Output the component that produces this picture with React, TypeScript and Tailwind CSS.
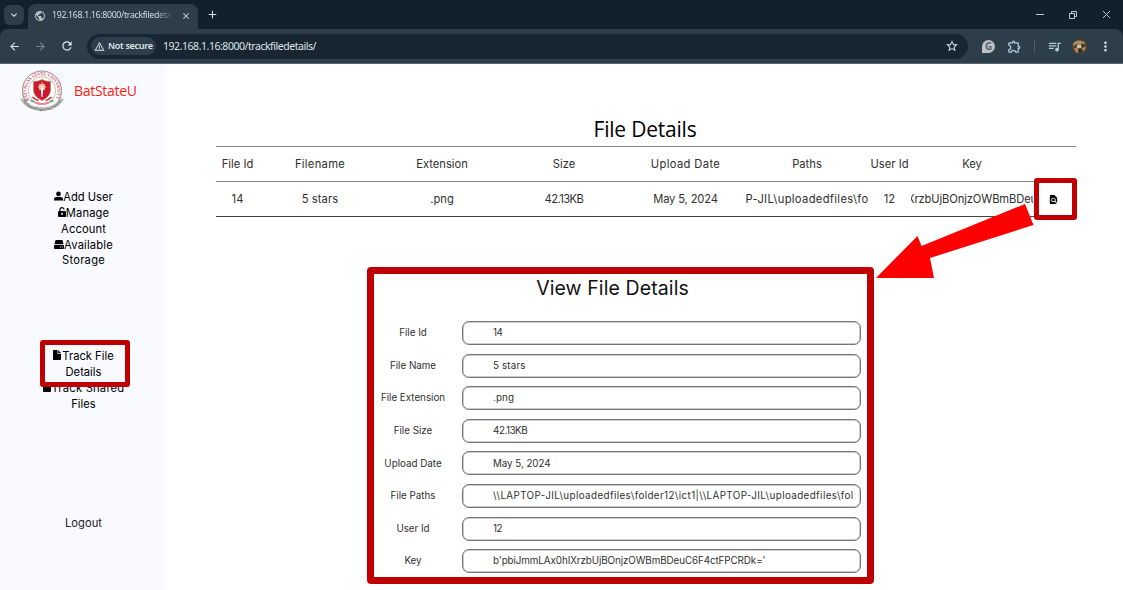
import React from "react";
import {
  MdArrowBack,
  MdArrowForward,
  MdRefresh,
  MdStarOutline,
  MdOutlineExtension,
  MdOutlineQueueMusic,
  MdMoreVert,
  MdKeyboardArrowDown,
  MdClose,
  MdAdd,
  MdPublic,
  MdWarningAmber,
  MdFindInPage,
} from "react-icons/md";

function FileIcon() {
  return (
    <svg viewBox="0 0 8 10" className="inline-block h-[10px] w-[8px] align-[0px]">
      <path d="M.8 0h3.700v3.700H8V9.200a.8.8 0 0 1-.8.8H.8a.8.8 0 0 1-.8-.8V.8A.8.8 0 0 1 .8 0z" />
      <path d="M5.200 0 8 2.900H5.200z" />
    </svg>
  );
}

function PersonIcon() {
  return (
    <svg viewBox="0 0 10 10" className="inline-block h-[10px] w-[9px] align-[0px]">
      <circle cx="5" cy="2.700" r="2.600" />
      <path d="M0 10V8.300Q0 6 2.500 6h5Q10 6 10 8.300V10z" />
    </svg>
  );
}

function LockIcon() {
  return (
    <svg viewBox="0 0 8 10" className="inline-block h-[10px] w-[8px] align-[0px]">
      <path d="M2 5V2.800a2 2 0 0 1 4-.3" fill="none" stroke="#000" strokeWidth="1.200" />
      <path fillRule="evenodd" d="M1 4h6q1 0 1 1v4q0 1-1 1H1q-1 0-1-1V5q0-1 1-1zm2.300 1.800v2.300h1.400V5.800z" />
    </svg>
  );
}

function DriveIcon() {
  return (
    <svg viewBox="0 0 10 9" className="inline-block h-[9px] w-[10px] align-[0px]">
      <path d="M2.300 0h5.400q.7 0 1 .8L9.500 4.200h-9L1.300.8q.3-.8 1-.8z" />
      <path fillRule="evenodd" d="M1 5h8q1 0 1 1v2q0 1-1 1H1q-1 0-1-1V6q0-1 1-1zm5 1.600v.9h.9v-.9zm1.800 0v.9h.9v-.9z" />
    </svg>
  );
}

function Seal() {
  return (
    <svg viewBox="0 0 44 42" className="h-[42px] w-[44px] shrink-0">
      <defs>
        <path id="ringTop" d="M9.500 30A15.500 15.500 0 1 1 34.500 30" />
        <path id="ribbon" d="M2.500 30.500Q9 40.500 22 40.500T41.500 30.500" />
      </defs>
      <circle cx="22" cy="20.500" r="19.500" fill="#fff" stroke="#8b8b8b" strokeWidth="1" />
      <circle cx="22" cy="20.500" r="13.700" fill="#fff" stroke="#a9a0a0" strokeWidth=".7" />
      <text fontSize="4.800" fontWeight="700" fill="#dc4a55" fontFamily="Liberation Serif, serif">
        <textPath href="#ringTop" textLength="66" lengthAdjust="spacingAndGlyphs">BATANGAS STATE UNIVERSITY</textPath>
      </text>
      <path d="M13.500 11.500q4.500.2 8.500-2 4 2.200 8.500 2v8.500q0 6.500-8.500 10.500-8.500-4-8.500-10.500z" fill="#cf1732" stroke="#b08a58" strokeWidth=".8" />
      <circle cx="22" cy="17" r="3.300" fill="#f4a07b" />
      <path d="M22 12v12M18 17h8M19.200 14l5.600 6M24.800 14l-5.600 6" stroke="#fff1dc" strokeWidth=".8" />
      <path d="M20.700 18h2.600L22.500 27h-1z" fill="#fff" />
      <path d="M12.500 27q3 3 6 3.500M31.500 27q-3 3-6 3.500" stroke="#d72b43" strokeWidth="1.700" fill="none" />
      <path d="M10.500 30.500l4 1.500M29.500 32l4-1.500" stroke="#47a566" strokeWidth="1.500" />
      <path d="M15 32.500q7 3 14 0" stroke="#e88690" strokeWidth="2" fill="none" />
      <path d="M1.500 28.500Q8 39 22 39T42.500 28.500" stroke="#c4c6c6" strokeWidth="4" fill="none" />
      <text fontSize="3.800" fontWeight="700" fill="#555" fontFamily="Liberation Serif, serif">
        <textPath href="#ribbon" textLength="46" lengthAdjust="spacingAndGlyphs">The National Engineering University</textPath>
      </text>
    </svg>
  );
}

function Browser() {
  return (
    <header className="h-16 bg-[#11202c] font-['Noto_Sans',sans-serif] text-[#dce5ea]">
      <div className="flex h-[29px] items-center">
        <button className="ml-1 flex h-5 w-5 items-center justify-center rounded-md bg-[#2d3d49]">
          <MdKeyboardArrowDown size={12} />
        </button>
        <div className="ml-1 mt-1 flex h-[25px] w-[170px] items-center rounded-t-lg bg-[#2d3d49] pb-0.5 pl-1.5">
          <MdPublic size={12} className="text-[#b5bfc6]" />
          <span className="ml-1.5 w-[122px] overflow-hidden whitespace-nowrap bg-gradient-to-r from-[#e3eaee] from-85% to-[#2d3d49] bg-clip-text text-[8.800px] tracking-[-0.34px] text-transparent">
            192.168.1.16:8000/trackfiledeta
          </span>
          <MdClose size={10} className="ml-[7px]" />
        </div>
        <MdAdd size={13} className="ml-[8px]" />
        <div className="flex-1" />
        <svg width="76" height="12" viewBox="0 0 76 12" fill="none" stroke="#c4ccd2" strokeWidth="1" className="mr-[11px]">
          <path d="M0 5.500h8M33.500 4.500h5v5h-5zM35.500 4.500v-2h5v5h-2M67 2l7 7M74 2l-7 7" />
        </svg>
      </div>
      <div className="flex h-[35px] items-center rounded-t-lg border-b border-[#536570] bg-[#2d3d49]">
        <MdArrowBack size={13} className="ml-[8px]" />
        <MdArrowForward size={13} className="ml-[13px] text-[#778690]" />
        <MdRefresh size={14} className="ml-[13px]" />
        <div className="ml-[13px] flex h-[25px] w-[881px] items-center rounded-full bg-[#172631] pl-1">
          <div className="flex h-[18px] w-[65px] items-center rounded-full bg-[#2d3d49] pl-[3px]">
            <MdWarningAmber size={11} />
            <span className="ml-[3px] whitespace-nowrap text-[9px] font-semibold tracking-[-0.3px]">Not secure</span>
          </div>
          <span className="ml-[7px] mt-[2px] text-[10.500px] tracking-[-0.46px]">192.168.1.16:8000/trackfiledetails/</span>
          <MdStarOutline size={14} className="ml-auto mr-[9px]" />
        </div>
        <div className="ml-[14px] flex h-[13px] w-[13px] items-center justify-center rounded-full rounded-bl-sm bg-[#bcc2c4] text-[10px] font-bold text-[#55616a]">
          G
        </div>
        <MdOutlineExtension size={15} className="ml-[12px] text-[#b5cdda]" />
        <div className="ml-3 h-3 w-px bg-[#4c5d69]" />
        <MdOutlineQueueMusic size={15} className="ml-[12px] text-[#b5cdda]" />
        <svg viewBox="0 0 16 16" className="ml-[10px] h-[15px] w-[15px]">
          <circle cx="8" cy="8" r="8" fill="#59452f" />
          <path d="M1 5q5-6 13-1l-3 3-5-2-4 3z" fill="#a78d66" />
          <path d="M5 6h5v4H5z" fill="#d8bd9d" />
          <path d="M2 10l4-1 1 5-2 1zM10 10l5-2-2 5z" fill="#b98650" />
          <path d="M7 10h3v5H7zM3 6h2v2H3zM10 5h2v3h-2z" fill="#292d30" />
        </svg>
        <MdMoreVert size={15} className="ml-[11px]" />
      </div>
    </header>
  );
}

function Sidebar() {
  return (
    <aside className="relative flex w-[167px] flex-col bg-[#f8faff] text-center text-[11.200px] leading-[15.850px] text-[#222]">
      <div className="flex h-[54px] items-center pl-5 text-left">
        <Seal />
        <span className="ml-[10px] font-['Open_Sans',sans-serif] text-[14px] tracking-[-0.3px] text-[#ff1a12]">BatStateU</span>
      </div>
      <nav className="mt-[72px] flex flex-col text-black">
        <div><PersonIcon />Add User</div>
        <div className="tracking-[0.1px]"><LockIcon />Manage<br />Account</div>
        <div className="tracking-[0.17px]"><DriveIcon />Available<br /><span className="tracking-[0.25px]">Storage</span></div>
      </nav>
      <nav className="mt-[80px] flex flex-col text-black">
        <div><FileIcon /><span className="ml-px">Track File</span><br />Details</div>
        <div><FileIcon /><span className="ml-px tracking-[0.22px]">Track Shared</span><br />Files</div>
      </nav>
      <div className="mt-[103px]">Logout</div>
      <div className="absolute left-[40px] top-[276px] h-[47px] w-[90px] rounded-[3px] border-[5px] border-[#c00000]" />
    </aside>
  );
}

const grid = "grid grid-cols-[43px_122px_122px_122px_121px_122px_43px_122px_43px] items-center text-center";

function FileTable() {
  return (
    <div className="ml-[49px] w-[860px] text-[11.200px] text-[#303030]">
      <div className={`${grid} h-[35px] border-t border-[#888]`}>
        <span className="whitespace-nowrap">File Id</span>
        <span className="tracking-[0.3px]">Filename</span>
        <span>Extension</span>
        <span>Size</span>
        <span className="tracking-[0.36px]">Upload Date</span>
        <span>Paths</span>
        <span className="whitespace-nowrap">User Id</span>
        <span>Key</span>
        <span />
      </div>
      <div className={`${grid} h-9 border-y border-t-[#888] border-b-[#444]`}>
        <span>14</span>
        <span className="tracking-[0.1px]">5 stars</span>
        <span>.png</span>
        <span className="tracking-[-0.55px]">42.13KB</span>
        <span className="tracking-[-0.15px]">May 5, 2024</span>
        <span className="flex justify-center overflow-hidden whitespace-nowrap tracking-[0.33px]">P-JIL\uploadedfiles\fo</span>
        <span>12</span>
        <span className="flex justify-center overflow-hidden whitespace-nowrap tracking-[-0.13px]">XrzbUjBOnjzOWBmBDeu</span>
        <MdFindInPage size={11} className="ml-[15px] text-black" />
      </div>
    </div>
  );
}

type Field = { label: string; value: string; tracking: string };

const fields: Field[] = [
  { label: "File Id", value: "14", tracking: "tracking-[-0.5px]" },
  { label: "File Name", value: "5 stars", tracking: "tracking-[0.15px]" },
  { label: "File Extension", value: ".png", tracking: "tracking-[0.15px]" },
  { label: "File Size", value: "42.13KB", tracking: "tracking-[-0.45px]" },
  { label: "Upload Date", value: "May 5, 2024", tracking: "tracking-[-0.05px]" },
  {
    label: "File Paths",
    value: "\\\\LAPTOP-JIL\\uploadedfiles\\folder12\\ict1|\\\\LAPTOP-JIL\\uploadedfiles\\fol",
    tracking: "tracking-[0.4px]",
  },
  { label: "User Id", value: "12", tracking: "tracking-[-0.4px]" },
  { label: "Key", value: "b'pbiJmmLAx0hIXrzbUjBOnjzOWBmBDeuC6F4ctFPCRDk='", tracking: "tracking-[-0.07px]" },
];

function DetailsPanel() {
  return (
    <section className="ml-[200px] mt-[50px] h-[317px] w-[507px] rounded-[4px] border-[7px] border-[#c00000] bg-white">
      <h2 className="ml-[-16px] text-center text-[19.500px] leading-7 tracking-[0.1px] text-[#111]">View File Details</h2>
      <div className="mt-[19px] flex flex-col gap-[8.600px]">
        {fields.map(({ label, value, tracking }) => (
          <div key={label} className="flex h-6 items-center text-[9.800px] text-[#303030]">
            <span className="w-[78px] whitespace-nowrap pt-px text-center">{label}</span>
            <div className={`ml-[10px] flex h-6 w-[399px] items-center overflow-hidden whitespace-nowrap rounded-[7px] border border-[#777] pl-[30px] pt-px shadow-[inset_0_0_0_0.5px_#999] ${tracking}`}>
              {value}
            </div>
          </div>
        ))}
      </div>
    </section>
  );
}

export default function App() {
  return (
    <div className="relative h-[590px] w-[1123px] overflow-hidden bg-white font-['Inter',sans-serif]">
      <Browser />
      <div className="flex h-[526px]">
        <Sidebar />
        <main className="flex-1">
          <h1 className="ml-12 mt-[49px] h-[33px] w-[860px] text-center font-['Open_Sans',sans-serif] text-[21px] leading-[33px] tracking-[-0.22px] text-black">File Details</h1>
          <FileTable />
          <DetailsPanel />
        </main>
      </div>
      <div className="absolute left-[1034px] top-[178px] h-[42px] w-[43px] rounded-[3px] border-[5px] border-[#c00000]" />
      <svg viewBox="0 0 160 76" className="absolute left-[876px] top-[203px] h-[76px] w-[160px]">
        <path d="M149 1 157.500 22 54 55 58 75H0L41.500 33l4 10z" fill="red" />
      </svg>
    </div>
  );
}
